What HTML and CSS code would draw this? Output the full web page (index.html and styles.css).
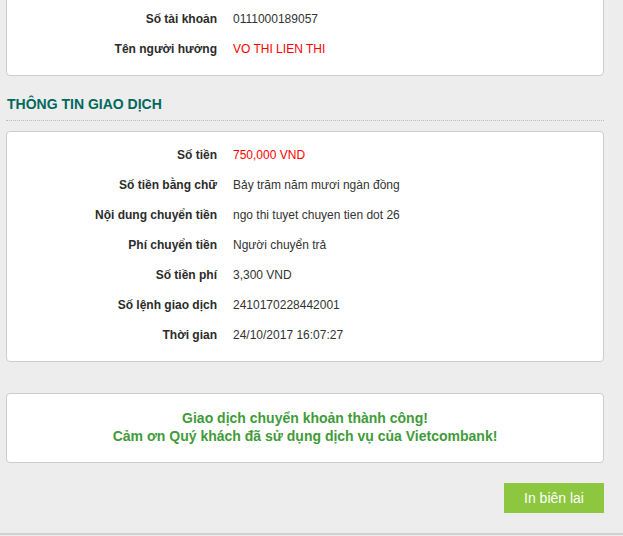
FILE: index.html
```html
<!DOCTYPE html>
<html>
  <head>
    <title>Chuyển khoản thành công</title>
    <link rel="stylesheet" href="styles.css">
  </head>
  <body>
    <div class="page">
      <div class="box box-top">
        <div class="row">
          <div class="label">Số tài khoản</div>
          <div class="value">0111000189057</div>
        </div>
        <div class="row">
          <div class="label">Tên người hưởng</div>
          <div class="value red">VO THI LIEN THI</div>
        </div>
      </div>

      <h2 class="section-title">THÔNG TIN GIAO DỊCH</h2>

      <div class="box">
        <div class="row">
          <div class="label">Số tiền</div>
          <div class="value red">750,000 VND</div>
        </div>
        <div class="row">
          <div class="label">Số tiền bằng chữ</div>
          <div class="value">Bảy trăm năm mươi ngàn đồng</div>
        </div>
        <div class="row">
          <div class="label">Nội dung chuyển tiền</div>
          <div class="value">ngo thi tuyet chuyen tien dot 26</div>
        </div>
        <div class="row">
          <div class="label">Phí chuyển tiền</div>
          <div class="value">Người chuyển trả</div>
        </div>
        <div class="row">
          <div class="label">Số tiền phí</div>
          <div class="value">3,300 VND</div>
        </div>
        <div class="row">
          <div class="label">Số lệnh giao dịch</div>
          <div class="value">2410170228442001</div>
        </div>
        <div class="row">
          <div class="label">Thời gian</div>
          <div class="value">24/10/2017 16:07:27</div>
        </div>
      </div>

      <div class="box message">
        Giao dịch chuyển khoản thành công!<br>
        Cảm ơn Quý khách đã sử dụng dịch vụ của Vietcombank!
      </div>

      <div class="actions">
        <button class="print-button">In biên lai</button>
      </div>
    </div>
    <div class="footer"></div>
  </body>
</html>
```

FILE: styles.css
```css
body {
  margin: 0;
  background-color: #ededed;
  font-family: "Liberation Sans", Arial, sans-serif;
  font-size: 12px;
  color: #333;
}

.page {
  width: 598px;
  margin-left: 6px;
}

.box {
  background-color: #fff;
  border: 1px solid #ccc;
  border-radius: 4px;
  padding: 8px 0 11px 0;
}

.box-top {
  margin-top: -5px;
  border-top-left-radius: 0;
  border-top-right-radius: 0;
}

.row {
  display: grid;
  grid-template-columns: 210px 1fr;
  column-gap: 16px;
  height: 30px;
  align-items: center;
}

.label {
  text-align: right;
  font-weight: bold;
  color: #2b2b2b;
}

.value {
  color: #333;
}

.red {
  color: #f00;
}

.section-title {
  margin: 18px 0 10px 0;
  padding: 0 0 6px 1px;
  font-size: 14px;
  line-height: 20px;
  color: #00695c;
  border-bottom: 1px dotted #bbb;
}

.message {
  margin-top: 31px;
  padding: 15px 0 17px 0;
  text-align: center;
  font-size: 14px;
  line-height: 18px;
  font-weight: bold;
  color: #3f9b3a;
}

.actions {
  display: flex;
  justify-content: flex-end;
  margin-top: 20px;
  padding-bottom: 20px;
}

.print-button {
  width: 100px;
  height: 30px;
  border: none;
  background-color: #8dc63f;
  color: #fff;
  font-family: "Liberation Sans", Arial, sans-serif;
  font-size: 14px;
  cursor: pointer;
}

.print-button:hover {
  background-color: #7ab32e;
}

.footer {
  border-top: 2px solid #d0d0d0;
  height: 10px;
}
```
